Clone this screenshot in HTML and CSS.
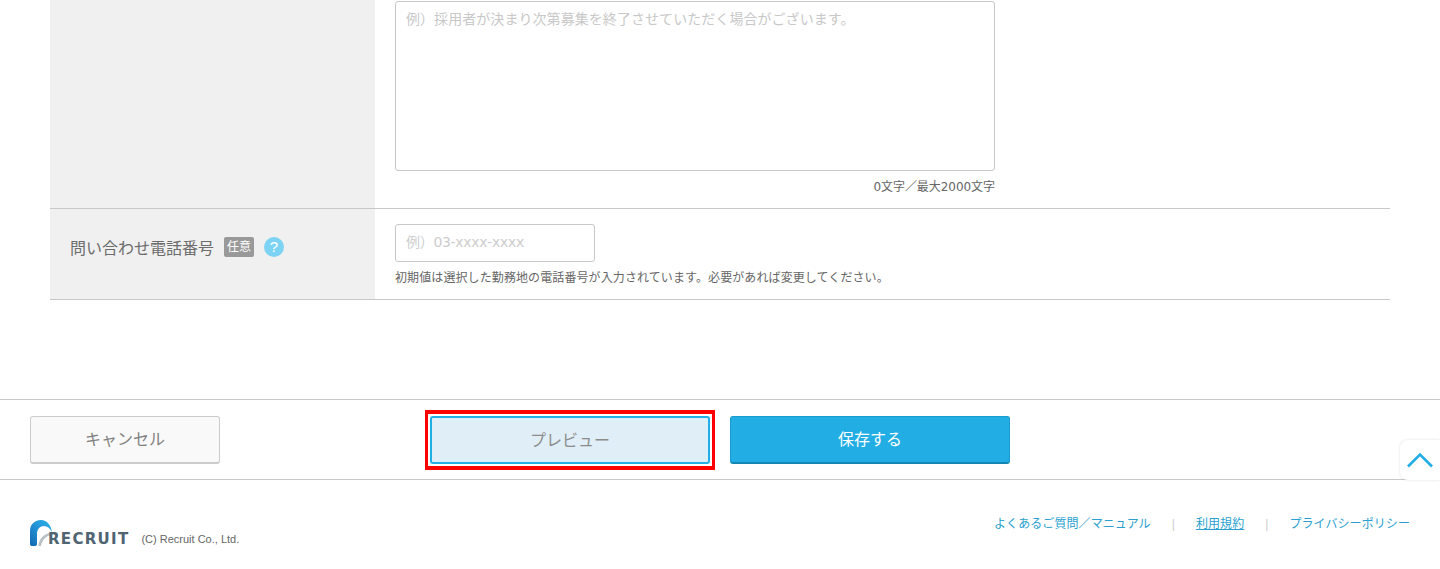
FILE: index.html
```html
<!DOCTYPE html>
<html>

<head>
    <title>Job Edit</title>
    <link rel="stylesheet" href="styles.css">
</head>

<body>
    <div class="form-table">
        <div class="row row--first">
            <div class="row-head"></div>
            <div class="row-body row-body--first">
                <div class="textarea">例）採用者が決まり次第募集を終了させていただく場合がございます。</div>
                <div class="counter">0文字／最大2000文字</div>
            </div>
        </div>
        <div class="row row--tel">
            <div class="row-head row-head--tel">
                <span class="row-label">問い合わせ電話番号</span>
                <span class="badge">任意</span>
                <span class="help">?</span>
            </div>
            <div class="row-body row-body--tel">
                <div class="input">例）03-xxxx-xxxx</div>
                <p class="note">初期値は選択した勤務地の電話番号が入力されています。必要があれば変更してください。</p>
            </div>
        </div>
    </div>

    <div class="action-bar">
        <button class="btn btn--cancel">キャンセル</button>
        <div class="preview-frame">
            <button class="btn btn--preview">プレビュー</button>
        </div>
        <button class="btn btn--save">保存する</button>
    </div>

    <a class="page-top" href="#">
        <svg width="28" height="16" viewBox="0 0 28 16">
            <path d="M2 14.5 L14 2.5 L26 14.5" fill="none" stroke="#22aee4" stroke-width="2.6" />
        </svg>
    </a>

    <div class="footer">
        <div class="logo">
            <svg class="logo-mark" width="23" height="27" viewBox="0 0 23 27">
                <defs>
                    <linearGradient id="arch" x1="0" y1="1" x2="1" y2="0">
                        <stop offset="0" stop-color="#1468b0" />
                        <stop offset="0.55" stop-color="#2496d8" />
                        <stop offset="1" stop-color="#2cb4ea" />
                    </linearGradient>
                </defs>
                <path d="M0 24 V11 C0 4 5 0 11 0 C17 0 21 5 22 12 C20 8 17 6 14 6 C10 6 7 9 7 14 V24 C7 25.5 6 26 4 26 H2 C1 26 0 25.5 0 24 Z" fill="url(#arch)" />
                <path d="M8.5 26 C9 19 13 14 22 12.5 V14.5 C16 16 12 20 11 26 Z" fill="#b9c0c6" />
            </svg>
            <span class="logo-name">RECRUIT</span>
            <span class="copyright">(C) Recruit Co., Ltd.</span>
        </div>
        <div class="footer-links">
            <a href="#">よくあるご質問／マニュアル</a>
            <span class="sep">|</span>
            <a class="current" href="#">利用規約</a>
            <span class="sep">|</span>
            <a href="#">プライバシーポリシー</a>
        </div>
    </div>
</body>

</html>
```

FILE: styles.css
```css
body {
    margin: 0;
    background-color: #fff;
    color: #555;
    font-family: "Liberation Sans", "Noto Sans CJK JP", sans-serif;
    overflow: hidden;
}

.form-table {
    margin: 0 50px;
}

.row {
    display: flex;
    border-bottom: 1px solid #c8c8c8;
}

.row--first {
    height: 208px;
}

.row--tel {
    height: 90px;
}

.row-head {
    width: 325px;
    background-color: #f0f0f0;
    flex-shrink: 0;
    box-sizing: border-box;
}

.row-head--tel {
    display: flex;
    align-items: center;
    padding: 0 0 14px 20px;
}

.row-label {
    font-size: 16px;
    color: #6c6c6c;
}

.badge {
    margin-left: 10px;
    width: 30px;
    height: 20px;
    line-height: 20px;
    background-color: #999;
    color: #fff;
    font-size: 12px;
    text-align: center;
    border-radius: 2px;
}

.help {
    margin-left: 10px;
    width: 20px;
    height: 20px;
    line-height: 20px;
    border-radius: 50%;
    background-color: #7dd3f3;
    color: #fff;
    font-size: 15px;
    text-align: center;
}

.row-body {
    padding-left: 20px;
    flex: 1;
}

.row-body--first {
    padding-top: 1px;
}

.row-body--tel {
    padding-top: 15px;
}

.textarea {
    width: 600px;
    height: 170px;
    box-sizing: border-box;
    border: 1px solid #c8c8c8;
    border-radius: 3px;
    padding: 7px 10px;
    font-size: 14px;
    line-height: 20px;
    letter-spacing: 0.06px;
    color: #c8c8c8;
}

.counter {
    width: 600px;
    margin-top: 8px;
    text-align: right;
    font-family: "DejaVu Sans", "Noto Sans CJK JP", sans-serif;
    font-size: 12px;
    line-height: 16px;
    letter-spacing: -0.05px;
    color: #666;
}

.input {
    width: 200px;
    height: 38px;
    box-sizing: border-box;
    border: 1px solid #c8c8c8;
    border-radius: 3px;
    padding: 0 10px;
    font-family: "DejaVu Sans", "Noto Sans CJK JP", sans-serif;
    font-size: 14px;
    letter-spacing: -0.3px;
    line-height: 35px;
    color: #cdcdcd;
}

.note {
    margin: 7px 0 0;
    font-size: 12px;
    line-height: 18px;
    letter-spacing: 0.1px;
    color: #666;
}

.action-bar {
    display: flex;
    align-items: center;
    height: 79px;
    margin-top: 99px;
    padding-left: 30px;
    border-top: 1px solid #c8c8c8;
    border-bottom: 1px solid #c8c8c8;
}

.btn {
    height: 48px;
    box-sizing: border-box;
    font-family: inherit;
    font-size: 16px;
    border-radius: 3px;
    padding: 0 0 2px;
}

.btn--cancel {
    width: 190px;
    background-color: #f9f9f9;
    border: 1px solid #ccc;
    border-bottom-width: 2px;
    color: #808080;
}

.preview-frame {
    margin-left: 205px;
    padding: 2px;
    display: flex;
    border: solid #f00;
    border-width: 4px 3px;
}

.btn--preview {
    width: 280px;
    background-color: #e0eef7;
    border: 2px solid #22aee4;
    color: #8c8c8c;
}

.btn--save {
    margin-left: 15px;
    width: 280px;
    background-color: #22aee4;
    border: 1px solid #1a9cce;
    border-bottom: 2px solid #1585b3;
    color: #fff;
}

.page-top {
    position: absolute;
    top: 440px;
    right: 0;
    width: 40px;
    height: 40px;
    display: flex;
    align-items: center;
    justify-content: center;
    background-color: #fff;
    border-radius: 8px 0 0 8px;
    box-shadow: 0 0 3px rgba(0, 0, 0, 0.12);
}

.footer {
    display: flex;
    justify-content: space-between;
    padding: 36px 30px 0;
}

.logo {
    display: flex;
    align-items: flex-end;
    height: 30px;
    margin-top: 1px;
}

.logo-name {
    margin-left: -5px;
    font-family: "DejaVu Sans", sans-serif;
    font-size: 15px;
    font-weight: bold;
    line-height: 15px;
    letter-spacing: 1.3px;
    color: #4f6472;
}

.copyright {
    margin-left: 12px;
    margin-bottom: 1px;
    font-size: 11px;
    line-height: 14px;
    color: #666;
}

.footer-links {
    display: flex;
    gap: 21px;
    font-size: 12px;
    line-height: 16px;
    letter-spacing: 0.08px;
}

.footer-links a {
    color: #2a9fd0;
    text-decoration: none;
}

.footer-links a.current {
    text-decoration: underline;
}

.sep {
    color: #ccc;
}
```
